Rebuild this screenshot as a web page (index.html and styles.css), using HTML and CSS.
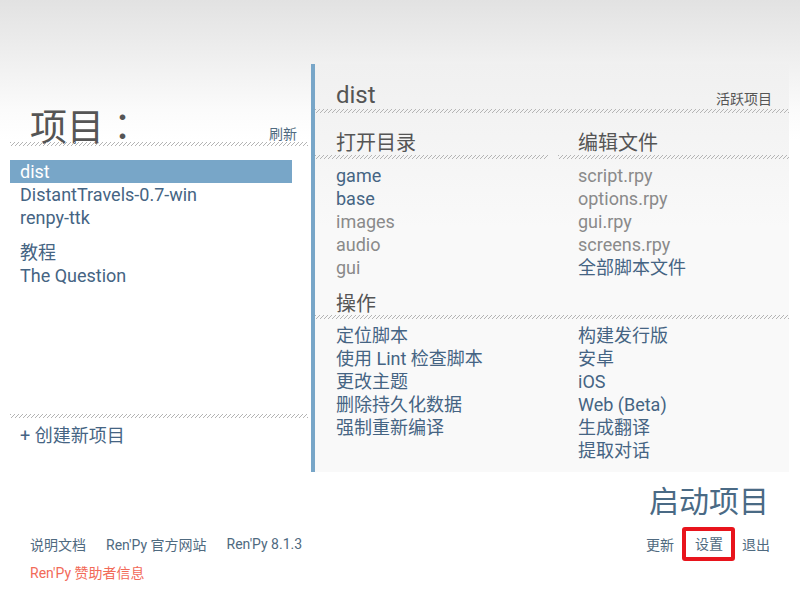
FILE: index.html
```html
<!DOCTYPE html>
<html lang="zh-CN">
<head>
<meta charset="utf-8">
<title>Ren'Py</title>
<link rel="stylesheet" href="styles.css">
</head>
<body>
<div class="screen">
  <div class="main">
    <section class="left">
      <div class="left-head">
        <h1 class="title">项目<span class="colon" lang="zh-TW">：</span></h1>
        <span class="small-link">刷新</span>
      </div>
      <div class="hatch"></div>
      <ul class="plist">
        <li class="item selected">dist</li>
        <li class="item">DistantTravels-0.7-win</li>
        <li class="item">renpy-ttk</li>
      </ul>
      <ul class="plist second">
        <li class="item">教程</li>
        <li class="item">The Question</li>
      </ul>
      <div class="spacer"></div>
      <div class="hatch"></div>
      <div class="create">+ 创建新项目</div>
    </section>
    <section class="right">
      <div class="right-head">
        <span class="pname">dist</span>
        <span class="small-gray">活跃项目</span>
      </div>
      <div class="hatch"></div>
      <div class="cols">
        <div class="col">
          <div class="sec-head"><span>打开目录</span></div>
          <div class="hatch"></div>
          <ul class="links">
            <li class="lnk">game</li>
            <li class="lnk">base</li>
            <li class="dim">images</li>
            <li class="dim">audio</li>
            <li class="dim">gui</li>
          </ul>
        </div>
        <div class="col">
          <div class="sec-head"><span>编辑文件</span></div>
          <div class="hatch"></div>
          <ul class="links">
            <li class="dim">script.rpy</li>
            <li class="dim">options.rpy</li>
            <li class="dim">gui.rpy</li>
            <li class="dim">screens.rpy</li>
            <li class="lnk">全部脚本文件</li>
          </ul>
        </div>
      </div>
      <div class="sec-head ops"><span>操作</span></div>
      <div class="hatch"></div>
      <div class="cols">
        <ul class="links col">
          <li class="lnk">定位脚本</li>
          <li class="lnk">使用 Lint 检查脚本</li>
          <li class="lnk">更改主题</li>
          <li class="lnk">删除持久化数据</li>
          <li class="lnk">强制重新编译</li>
        </ul>
        <ul class="links col">
          <li class="lnk">构建发行版</li>
          <li class="lnk">安卓</li>
          <li class="lnk">iOS</li>
          <li class="lnk">Web (Beta)</li>
          <li class="lnk">生成翻译</li>
          <li class="lnk">提取对话</li>
        </ul>
      </div>
    </section>
  </div>
  <footer class="footer">
    <div class="launch">启动项目</div>
    <div class="foot-left">
      <span>说明文档</span>
      <span>Ren'Py 官方网站</span>
      <span>Ren'Py 8.1.3</span>
    </div>
    <div class="foot-right">
      <span>更新</span>
      <span class="boxed">设置</span>
      <span>退出</span>
    </div>
    <div class="sponsor">Ren'Py 赞助者信息</div>
  </footer>
</div>
</body>
</html>
```

FILE: styles.css
```css
* { box-sizing: border-box; }
html, body { margin: 0; padding: 0; }
body {
  width: 800px;
  height: 600px;
  overflow: hidden;
  font-family: Roboto, "Noto Sans CJK SC", sans-serif;
  background: linear-gradient(#e2e2e2 0, #fbfbfb 110px, #ffffff 140px, #ffffff 100%);
  color: #555;
}
ul { list-style: none; margin: 0; padding: 0; }
h1 { margin: 0; font-weight: normal; }

.screen { width: 800px; height: 600px; display: flex; flex-direction: column; }

.main {
  display: flex;
  padding-top: 64px;
  height: 472px;
}

.hatch {
  height: 4px;
  flex: none;
  background: repeating-linear-gradient(135deg, #b4b4b4 0 1px, rgba(255,255,255,0) 1px 2.83px);
}

/* left */
.left {
  width: 298px;
  margin-left: 10px;
  display: flex;
  flex-direction: column;
}
.left-head {
  height: 78px;
  display: flex;
  justify-content: space-between;
  align-items: flex-end;
  padding: 0 11px 0 20px;
}
.title {
  font-size: 37px;
  line-height: 37px;
  margin-bottom: -5px;
  color: #555;
  white-space: nowrap;
}
.colon { font-family: "Noto Sans CJK TC", sans-serif; }
.small-link {
  font-size: 14px;
  line-height: 14px;
  margin-bottom: 1px;
  color: #4f6a80;
}
.plist { margin-top: 14px; padding-right: 16px; }
.plist.second { margin-top: 12px; }
.item {
  height: 23px;
  line-height: 23px;
  font-size: 18px;
  padding-left: 10px;
  color: #456483;
}
.item.selected { background: #78a6c8; color: #fff; }
.spacer { flex: 1; }
.create {
  height: 54px;
  padding: 6px 0 0 10px;
  font-size: 18px;
  line-height: 23px;
  color: #456483;
}

/* right */
.right {
  margin-left: 3px;
  width: 478px;
  height: 408px;
  border-left: 4px solid #78a6c8;
  background: linear-gradient(#f0f0f0, #f9f9f9 40%, #f9f9f9);
  display: flex;
  flex-direction: column;
}
.right-head {
  height: 45px;
  display: flex;
  justify-content: space-between;
  align-items: flex-end;
  padding: 0 17px 0 21px;
}
.pname {
  font-size: 24px;
  line-height: 28px;
  color: #555;
}
.small-gray {
  font-size: 14px;
  line-height: 14px;
  margin-bottom: 3px;
  color: #555;
}
.cols {
  display: grid;
  grid-template-columns: 233px 231px;
  column-gap: 10px;
}
.sec-head {
  height: 42px;
  display: flex;
  align-items: flex-end;
  padding-left: 21px;
}
.sec-head span {
  font-size: 20px;
  line-height: 20px;
  margin-bottom: 2px;
  color: #555;
}
.col + .col .sec-head { padding-left: 20px; }
.sec-head.ops { height: 36px; }
.sec-head.ops span { margin-bottom: 1px; }
.links { padding: 5px 0 0 21px; }
.col + .col .links, .links.col + .links.col { padding-left: 20px; }
.links li {
  height: 23px;
  line-height: 23px;
  font-size: 18px;
  white-space: nowrap;
}
.lnk { color: #456483; }
.dim { color: #8a8a8a; }

/* footer */
.footer {
  display: grid;
  grid-template-columns: 1fr auto;
  grid-template-rows: 41px 34px 24px;
  padding-top: 14px;
}
.launch {
  grid-column: 2;
  grid-row: 1;
  font-size: 30px;
  line-height: 32px;
  color: #4a6a85;
  padding-right: 31px;
  text-align: right;
}
.foot-left {
  grid-column: 1;
  grid-row: 2;
  display: flex;
  align-items: center;
  gap: 20px;
  padding-left: 30px;
  font-size: 14px;
  color: #4f6a80;
}
.foot-right {
  grid-column: 2;
  grid-row: 2;
  display: flex;
  align-items: center;
  padding-right: 30px;
  font-size: 14px;
  color: #4f6a80;
}
.boxed {
  height: 34px;
  line-height: 26px;
  padding: 0 8px 0 9px;
  margin: 0 7px 0 8px;
  border: 4px solid #e8141c;
  border-radius: 3px;
}
.sponsor {
  grid-column: 1;
  grid-row: 3;
  padding-left: 30px;
  font-size: 14px;
  line-height: 24px;
  color: #f26a58;
}
```
